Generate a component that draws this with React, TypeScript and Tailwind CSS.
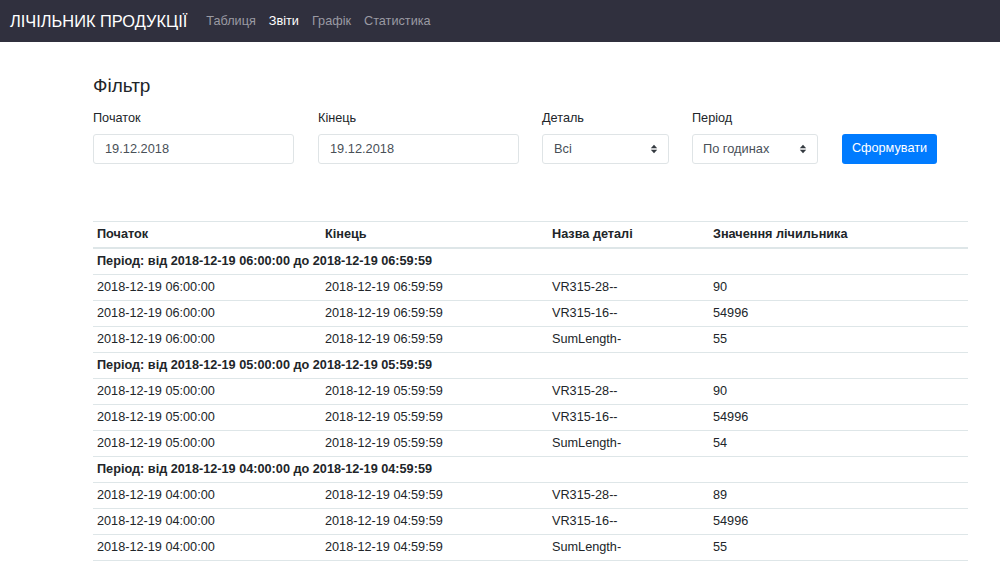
import React from 'react';

type Row = { start: string; end: string; part: string; value: string };
type Group = { title: string; rows: Row[] };

const groups: Group[] = [
  {
    title: 'Період: від 2018-12-19 06:00:00 до 2018-12-19 06:59:59',
    rows: [
      { start: '2018-12-19 06:00:00', end: '2018-12-19 06:59:59', part: 'VR315-28--', value: '90' },
      { start: '2018-12-19 06:00:00', end: '2018-12-19 06:59:59', part: 'VR315-16--', value: '54996' },
      { start: '2018-12-19 06:00:00', end: '2018-12-19 06:59:59', part: 'SumLength-', value: '55' },
    ],
  },
  {
    title: 'Період: від 2018-12-19 05:00:00 до 2018-12-19 05:59:59',
    rows: [
      { start: '2018-12-19 05:00:00', end: '2018-12-19 05:59:59', part: 'VR315-28--', value: '90' },
      { start: '2018-12-19 05:00:00', end: '2018-12-19 05:59:59', part: 'VR315-16--', value: '54996' },
      { start: '2018-12-19 05:00:00', end: '2018-12-19 05:59:59', part: 'SumLength-', value: '54' },
    ],
  },
  {
    title: 'Період: від 2018-12-19 04:00:00 до 2018-12-19 04:59:59',
    rows: [
      { start: '2018-12-19 04:00:00', end: '2018-12-19 04:59:59', part: 'VR315-28--', value: '89' },
      { start: '2018-12-19 04:00:00', end: '2018-12-19 04:59:59', part: 'VR315-16--', value: '54996' },
      { start: '2018-12-19 04:00:00', end: '2018-12-19 04:59:59', part: 'SumLength-', value: '55' },
    ],
  },
];

const SelectArrows = () => (
  <svg width="8" height="10" viewBox="0 0 8 10" className="shrink-0">
    <path d="M4 0.8 L7.2 4.2 H0.8 Z" fill="#343a40" />
    <path d="M4 9.2 L7.2 5.8 H0.8 Z" fill="#343a40" />
  </svg>
);

const Field: React.FC<{ label: string; width: string; children: React.ReactNode }> = ({ label, width, children }) => (
  <div className={`flex flex-col ${width}`}>
    <label className="text-[12.7px] leading-[20px] text-[#212529] mb-[6px]">{label}</label>
    {children}
  </div>
);

const App: React.FC = () => {
  return (
    <div className="min-h-[563px] bg-white text-[#212529]" style={{ fontFamily: '"Liberation Sans", Arial, sans-serif' }}>
      {/* Navbar */}
      <nav className="h-[42px] bg-[#30303e] flex items-center px-[10px] pt-[1px]">
        <span className="text-white text-[16.4px] mr-[19px]">ЛІЧІЛЬНИК ПРОДУКЦІЇ</span>
        <div className="flex items-center gap-[13px] text-[12.7px]">
          <span className="text-[#9a9aa3]">Таблиця</span>
          <span className="text-white">Звіти</span>
          <span className="text-[#9a9aa3]">Графік</span>
          <span className="text-[#9a9aa3]">Статистика</span>
        </div>
      </nav>

      <div className="ml-[93px] w-[875px]">
        {/* Filter */}
        <h2 className="text-[19px] leading-[24px] mt-[32px] mb-[10px]">Фільтр</h2>
        <div className="flex items-end">
          <Field label="Початок" width="w-[201px] mr-[24px]">
            <div className="h-[30px] border border-[#dfe4e6] rounded-[3px] flex items-center px-[11px] text-[12.8px] text-[#495057]">
              19.12.2018
            </div>
          </Field>
          <Field label="Кінець" width="w-[201px] mr-[23px]">
            <div className="h-[30px] border border-[#dfe4e6] rounded-[3px] flex items-center px-[11px] text-[12.8px] text-[#495057]">
              19.12.2018
            </div>
          </Field>
          <Field label="Деталь" width="w-[127px] mr-[23px]">
            <div className="h-[30px] border border-[#dfe4e6] rounded-[3px] flex items-center justify-between pl-[11px] pr-[10px] text-[12.8px] text-[#495057]">
              <span>Всі</span>
              <SelectArrows />
            </div>
          </Field>
          <Field label="Період" width="w-[126px] mr-[24px]">
            <div className="h-[30px] border border-[#dfe4e6] rounded-[3px] flex items-center justify-between pl-[10px] pr-[10px] text-[12.8px] text-[#495057]">
              <span>По годинах</span>
              <SelectArrows />
            </div>
          </Field>
          <button className="h-[30px] w-[95px] bg-[#007bff] text-white text-[12.7px] rounded-[3px]">Сформувати</button>
        </div>

        {/* Table */}
        <table className="w-full mt-[57px] border-collapse text-[12.7px] leading-[25px]">
          <colgroup>
            <col className="w-[228px]" />
            <col className="w-[227px]" />
            <col className="w-[161px]" />
            <col />
          </colgroup>
          <thead>
            <tr className="border-t border-[#dee6e8] border-b-2">
              <th className="text-left font-bold px-[4px] h-[26px]">Початок</th>
              <th className="text-left font-bold px-[4px]">Кінець</th>
              <th className="text-left font-bold px-[4px]">Назва деталі</th>
              <th className="text-left font-bold px-[4px]">Значення лічильника</th>
            </tr>
          </thead>
          <tbody>
            {groups.map((g) => (
              <React.Fragment key={g.title}>
                <tr className="border-b border-[#dee6e8]">
                  <td colSpan={4} className="font-bold px-[4px] h-[26px]">{g.title}</td>
                </tr>
                {g.rows.map((r, i) => (
                  <tr key={i} className="border-b border-[#dee6e8]">
                    <td className="px-[4px] h-[26px]">{r.start}</td>
                    <td className="px-[4px]">{r.end}</td>
                    <td className="px-[4px]">{r.part}</td>
                    <td className="px-[4px]">{r.value}</td>
                  </tr>
                ))}
              </React.Fragment>
            ))}
          </tbody>
        </table>
      </div>
    </div>
  );
};

export default App;
